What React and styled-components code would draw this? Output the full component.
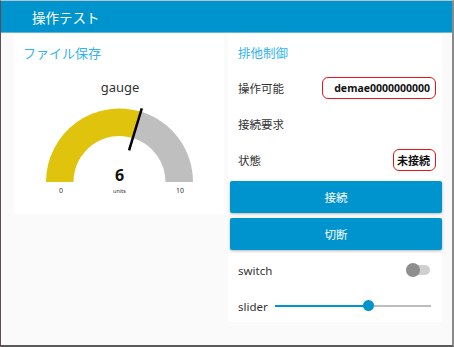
import React from "react";
import styled, { createGlobalStyle } from "styled-components";

const GlobalStyle = createGlobalStyle`
  html, body {
    margin: 0;
    padding: 0;
    background: #ffffff;
  }
  * {
    box-sizing: border-box;
  }
`;

const jp = `"Noto Sans CJK JP", "Noto Sans", sans-serif`;
const latin = `"Noto Sans", "Noto Sans CJK JP", sans-serif`;

const Frame = styled.div`
  width: 454px;
  height: 347px;
  display: flex;
  flex-direction: column;
  background: #fafafa;
  border-top: 1px solid #b9c4ca;
  border-left: 1px solid #5e4c58;
  border-right: 2px solid #8a8a8a;
  border-bottom: 2px solid #5a5a5a;
  overflow: hidden;
`;

const Toolbar = styled.header`
  height: 32px;
  flex: none;
  display: flex;
  align-items: center;
  padding-left: 31px;
  background: #0094ce;
  border-bottom: 1px solid #62b8dc;
  color: #ffffff;
  font-family: ${jp};
  font-size: 13.5px;
`;

const Content = styled.main`
  display: flex;
  align-items: flex-start;
  gap: 4px;
  padding: 1px 0 0 13px;
`;

const Card = styled.section`
  width: ${(p) => p.w}px;
  height: ${(p) => p.h}px;
  background: #ffffff;
  display: flex;
  flex-direction: column;
`;

const CardTitle = styled.div`
  height: 36px;
  flex: none;
  display: flex;
  align-items: center;
  padding-left: ${(p) => p.pad}px;
  color: #33b3ee;
  font-family: ${jp};
  font-size: ${(p) => p.size}px;
`;

const Row = styled.div`
  height: ${(p) => p.h || 36}px;
  flex: none;
  display: flex;
  align-items: center;
  justify-content: space-between;
  padding: 0 6px 0 10px;
  color: #333333;
  font-family: ${(p) => (p.latin ? latin : jp)};
  font-size: 11.5px;
`;

const Label = styled.span`
  flex: none;
`;

const Value = styled.span`
  border: 1px solid #e0161b;
  border-radius: 6px;
  padding: 0 5px;
  height: 22px;
  display: flex;
  align-items: center;
  justify-content: flex-end;
  white-space: nowrap;
  width: ${(p) => p.w}px;
  color: #111111;
  font-family: ${(p) => (p.jp ? jp : latin)};
  font-weight: 700;
  font-size: ${(p) => p.size || 11}px;
`;

const Button = styled.button`
  height: 32px;
  flex: none;
  width: 212px;
  margin: ${(p) => p.top}px 0 0 2px;
  border: none;
  border-radius: 2px;
  background: #0094ce;
  color: #ffffff;
  font-family: ${jp};
  font-size: 11.5px;
  box-shadow: 0 1px 3px rgba(0, 0, 0, 0.3);
`;

const SwitchTrack = styled.span`
  position: relative;
  width: 24px;
  height: 10px;
  margin-right: 6px;
  border-radius: 5px;
  background: #cfcfcf;
`;

const SwitchThumb = styled.span`
  position: absolute;
  left: 0;
  top: -2px;
  width: 14px;
  height: 14px;
  border-radius: 50%;
  background: #8e8e8e;
`;

const SliderTrack = styled.span`
  position: relative;
  width: 156px;
  height: 2px;
  margin-right: 5px;
  background: #bdbdbd;
`;

const SliderFill = styled.span`
  position: absolute;
  left: 0;
  top: 0;
  height: 2px;
  background: #0094ce;
`;

const SliderThumb = styled.span`
  position: absolute;
  top: -5px;
  width: 11px;
  height: 11px;
  margin-left: -5.5px;
  border-radius: 50%;
  background: #0094ce;
`;

const GaugeBox = styled.div`
  flex: 1;
`;

function Gauge({ value, min, max }) {
  const cx = 105.5;
  const cy = 112;
  const R = 73.5;
  const r = 46;
  const a = Math.PI * (1 - (value - min) / (max - min));
  const pt = (rad, ang) => [cx + rad * Math.cos(ang), cy - rad * Math.sin(ang)];
  const [ox, oy] = pt(R, a);
  const [ix, iy] = pt(r, a);
  const na = a + 0.02;
  const [n1x, n1y] = pt(33, na);
  const [n2x, n2y] = pt(77, na);
  return (
    <svg width="210" height="144" viewBox="0 0 210 144">
      <text x="106" y="22" textAnchor="middle" fontFamily='"Noto Sans", sans-serif' fontSize="13" fill="#333">
        gauge
      </text>
      <path
        d={`M ${cx - R} ${cy} A ${R} ${R} 0 0 1 ${ox} ${oy} L ${ix} ${iy} A ${r} ${r} 0 0 0 ${cx - r} ${cy} Z`}
        fill="#e0c30c"
      />
      <path
        d={`M ${ox} ${oy} A ${R} ${R} 0 0 1 ${cx + R} ${cy} L ${cx + r} ${cy} A ${r} ${r} 0 0 0 ${ix} ${iy} Z`}
        fill="#bfbfbf"
      />
      <line x1={n1x} y1={n1y} x2={n2x} y2={n2y} stroke="#000" strokeWidth="2.5" />
      <text x={cx} y="111" textAnchor="middle" fontFamily='"Noto Sans", sans-serif' fontWeight="700" fontSize="16" fill="#111">
        {value}
      </text>
      <text x={cx} y="123" textAnchor="middle" fontFamily='"Noto Sans", sans-serif' fontSize="5.5" fill="#333">
        units
      </text>
      <text x="47" y="123" textAnchor="middle" fontFamily='"Noto Sans", sans-serif' fontSize="7" fill="#333">
        {min}
      </text>
      <text x="166" y="123" textAnchor="middle" fontFamily='"Noto Sans", sans-serif' fontSize="7" fill="#333">
        {max}
      </text>
    </svg>
  );
}

export default function App() {
  const slider = 0.6;
  return (
    <>
      <GlobalStyle />
      <Frame>
        <Toolbar>操作テスト</Toolbar>
        <Content>
          <Card w={210} h={180}>
            <CardTitle pad={9} size={13}>ファイル保存</CardTitle>
            <GaugeBox>
              <Gauge value={6} min={0} max={10} />
            </GaugeBox>
          </Card>
          <Card w={214} h={288}>
            <CardTitle pad={10} size={12.5}>排他制御</CardTitle>
            <Row>
              <Label>操作可能</Label>
              <Value w={114} size={10.5}>demae0000000000</Value>
            </Row>
            <Row>
              <Label>接続要求</Label>
            </Row>
            <Row>
              <Label>状態</Label>
              <Value w={43} jp size={11}>未接続</Value>
            </Row>
            <Button top={3}>接続</Button>
            <Button top={5}>切断</Button>
            <Row latin h={40}>
              <Label>switch</Label>
              <SwitchTrack>
                <SwitchThumb />
              </SwitchTrack>
            </Row>
            <Row latin h={32}>
              <Label>slider</Label>
              <SliderTrack>
                <SliderFill style={{ width: `${slider * 100}%` }} />
                <SliderThumb style={{ left: `${slider * 100}%` }} />
              </SliderTrack>
            </Row>
          </Card>
        </Content>
      </Frame>
    </>
  );
}
